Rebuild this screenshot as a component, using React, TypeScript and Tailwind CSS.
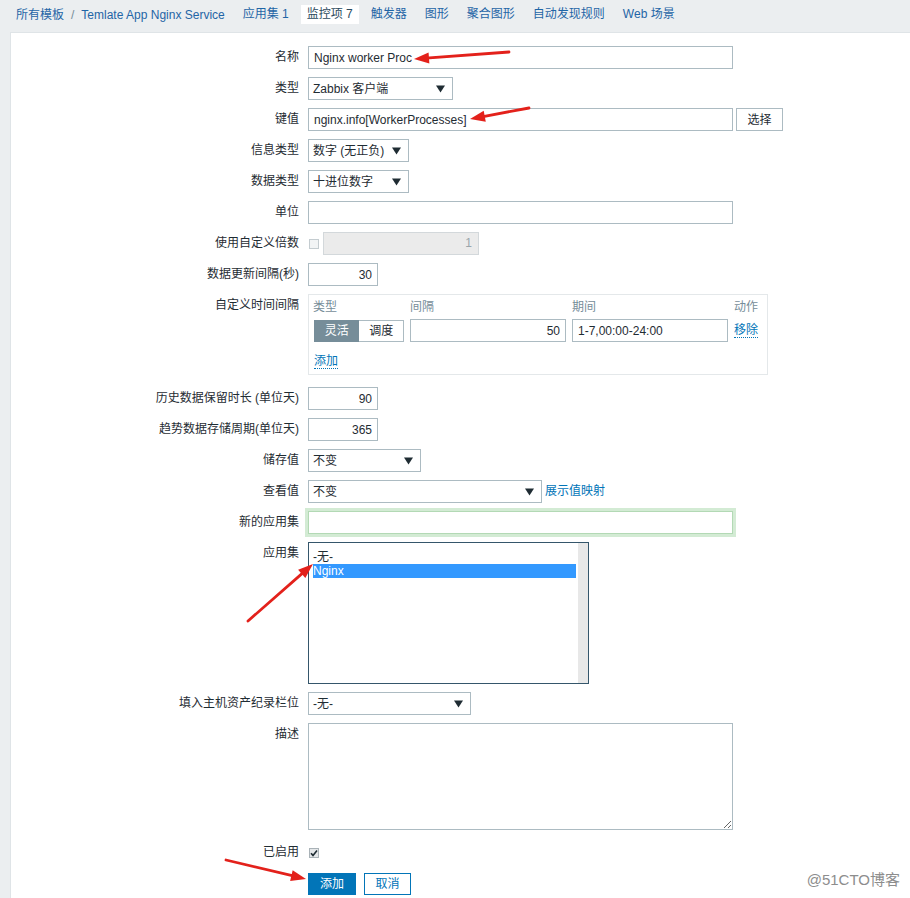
import React from 'react';

const FONT = "font-['Liberation_Sans','Noto_Sans_CJK_SC',sans-serif]";

// arrow annotations drawn over the screenshot
const ARROWS: [number, number, number, number][] = [
  [509, 52, 414, 59],
  [529, 108, 470, 119],
  [248, 621, 313, 564],
  [226, 860, 306, 879],
];

function arrowHead(x1: number, y1: number, x2: number, y2: number) {
  const dx = x2 - x1;
  const dy = y2 - y1;
  const len = Math.hypot(dx, dy);
  const ux = dx / len;
  const uy = dy / len;
  const bx = x2 - ux * 15;
  const by = y2 - uy * 15;
  const px = -uy * 5.5;
  const py = ux * 5.5;
  return `${x2},${y2} ${bx + px},${by + py} ${bx - px},${by - py}`;
}

function Arrows() {
  return (
    <svg className="absolute inset-0 pointer-events-none" width="910" height="898" viewBox="0 0 910 898">
      {ARROWS.map(([x1, y1, x2, y2], i) => {
        const len = Math.hypot(x2 - x1, y2 - y1);
        const ex = x2 - ((x2 - x1) / len) * 12;
        const ey = y2 - ((y2 - y1) / len) * 12;
        return (
          <g key={i}>
            <line x1={x1} y1={y1} x2={ex} y2={ey} stroke="#e3211b" strokeWidth="2.8" strokeLinecap="round" />
            <polygon points={arrowHead(x1, y1, x2, y2)} fill="#e3211b" />
          </g>
        );
      })}
    </svg>
  );
}

function TextInput({ value = '', className = '', right = false }: { value?: string; className?: string; right?: boolean }) {
  return (
    <input
      readOnly
      value={value}
      className={`h-[23px] border border-[#acbbc2] bg-white px-[5px] text-[12px] text-[#1f2c33] outline-none ${right ? 'text-right' : ''} ${className}`}
    />
  );
}

function Select({ value, className = '' }: { value: string; className?: string }) {
  return (
    <div className={`h-[23px] border border-[#acbbc2] bg-white pl-[4px] pr-[7px] flex items-center justify-between text-[#1f2c33] ${className}`}>
      <span>{value}</span>
      <svg width="9" height="8" viewBox="0 0 9 8">
        <path d="M0 0.5 H9 L4.5 7.5 Z" fill="#1f2c33" />
      </svg>
    </div>
  );
}

function Row({ label, children, className = '' }: { label: string; children: React.ReactNode; className?: string }) {
  return (
    <div className={`grid grid-cols-[288px_1fr] gap-x-[9px] ${className}`}>
      <div className="text-right leading-[23px] text-[#1f2c33] whitespace-nowrap">{label}</div>
      <div className="flex items-start">{children}</div>
    </div>
  );
}

const NAV = ['应用集 1', '监控项 7', '触发器', '图形', '聚合图形', '自动发现规则', 'Web 场景'];

function Nav() {
  return (
    <div className="h-[29px] flex items-center pl-[10px] text-[#1f65a6]">
      <span className="px-[6px]">所有模板</span>
      <span className="text-[#768d99] px-[1px]">/</span>
      <span className="px-[6px]">Temlate App Nginx Service</span>
      <div className="flex items-center gap-[6px] ml-[6px]">
        {NAV.map((item) => (
          <span
            key={item}
            className={`px-[6px] leading-[19px] ${item === '监控项 7' ? 'bg-white text-[#2b4a5e]' : ''}`}
          >
            {item}
          </span>
        ))}
      </div>
    </div>
  );
}

function IntervalTable() {
  return (
    <div className="w-[460px] h-[81px] border border-[#e4e8ea] pl-[4px] pt-[5px]">
      <div className="grid grid-cols-[91px_156px_156px_auto] gap-x-[6px] text-[#768d99] leading-[14px]">
        <span>类型</span>
        <span>间隔</span>
        <span>期间</span>
        <span>动作</span>
      </div>
      <div className="grid grid-cols-[91px_156px_156px_auto] gap-x-[6px] mt-[5px] items-center">
        <div className="flex h-[22px] pl-[1px]">
          <span className="w-[46px] bg-[#768d99] text-white flex items-center justify-center">灵活</span>
          <span className="w-[45px] border border-[#acbbc2] border-l-0 text-[#1f2c33] flex items-center justify-center">调度</span>
        </div>
        <TextInput value="50" right className="w-[156px] h-[22px]" />
        <TextInput value="1-7,00:00-24:00" className="w-[156px] h-[22px]" />
        <span className="text-[#0275b8] border-b border-dotted border-[#0275b8] leading-[14px] self-center w-fit">移除</span>
      </div>
      <div className="mt-[10px] pl-[1px]">
        <span className="text-[#0275b8] border-b border-dotted border-[#0275b8] leading-[14px]">添加</span>
      </div>
    </div>
  );
}

export default function App() {
  return (
    <div className={`relative w-[910px] h-[898px] overflow-hidden bg-[#ebeef0] text-[12px] ${FONT}`}>
      <Nav />
      <div className="ml-[10px] mt-[3px] h-[900px] bg-white border-l border-t border-[#dfe4e7] pt-[13px] flex flex-col gap-[8px]">
        <Row label="名称">
          <TextInput value="Nginx worker Proc" className="w-[425px]" />
        </Row>
        <Row label="类型">
          <Select value="Zabbix 客户端" className="w-[145px]" />
        </Row>
        <Row label="键值">
          <TextInput value="nginx.info[WorkerProcesses]" className="w-[425px]" />
          <button className="ml-[3px] h-[23px] w-[47px] border border-[#acbbc2] bg-white text-[#1f2c33] text-[12px]">选择</button>
        </Row>
        <Row label="信息类型">
          <Select value="数字 (无正负)" className="w-[101px]" />
        </Row>
        <Row label="数据类型">
          <Select value="十进位数字" className="w-[101px]" />
        </Row>
        <Row label="单位">
          <TextInput className="w-[425px]" />
        </Row>
        <Row label="使用自定义倍数">
          <div className="flex items-center h-[23px]">
            <span className="ml-[1px] w-[10px] h-[10px] border border-[#c4ccd0] bg-[#f2f4f5]" />
            <div className="ml-[4px] w-[156px] h-[23px] border border-[#d3d8db] bg-[#ebebeb] text-right pr-[6px] leading-[21px] text-[#9aa5ab]">1</div>
          </div>
        </Row>
        <Row label="数据更新间隔(秒)">
          <TextInput value="30" right className="w-[70px]" />
        </Row>
        <Row label="自定义时间间隔" className="mb-[4px]">
          <IntervalTable />
        </Row>
        <Row label="历史数据保留时长 (单位天)">
          <TextInput value="90" right className="w-[70px]" />
        </Row>
        <Row label="趋势数据存储周期(单位天)">
          <TextInput value="365" right className="w-[70px]" />
        </Row>
        <Row label="储存值">
          <Select value="不变" className="w-[113px]" />
        </Row>
        <Row label="查看值">
          <Select value="不变" className="w-[234px]" />
          <span className="ml-[3px] leading-[23px] text-[#0275b8]">展示值映射</span>
        </Row>
        <Row label="新的应用集">
          <TextInput className="w-[425px] !border-[#b3d9b5] shadow-[0_0_0_3px_#d3ebd4]" />
        </Row>
        <Row label="应用集">
          <div className="w-[281px] h-[142px] border border-[#35566b] flex">
            <div className="flex-1 pl-[4px] pr-[2px] pt-[7px] leading-[14px] text-[#1f2c33]">
              <div>-无-</div>
              <div className="bg-[#3399ff] text-white">Nginx</div>
            </div>
            <div className="w-[10px] bg-[#e8e8e8]" />
          </div>
        </Row>
        <Row label="填入主机资产纪录栏位">
          <Select value="-无-" className="w-[163px]" />
        </Row>
        <Row label="描述">
          <textarea readOnly className="w-[425px] h-[107px] border border-[#acbbc2] bg-white resize outline-none" />
        </Row>
        <Row label="已启用" className="mt-[3px]">
          <div className="h-[23px] flex items-center">
            <span className="ml-[1px] w-[10px] h-[10px] border border-[#a9b2b7] bg-[#e4e7e9] flex items-center justify-center">
              <svg width="8" height="8" viewBox="0 0 8 8">
                <path d="M1 4.2 L3 6.4 L7 1.4" stroke="#1f2c33" strokeWidth="1.6" fill="none" />
              </svg>
            </span>
          </div>
        </Row>
        <div className="grid grid-cols-[288px_1fr] gap-x-[9px] mt-[1px]">
          <div />
          <div className="flex gap-[8px]">
            <button className="h-[22px] w-[48px] bg-[#0275b8] text-white text-[12px]">添加</button>
            <button className="h-[22px] w-[47px] border border-[#0275b8] bg-white text-[#0275b8] text-[12px]">取消</button>
          </div>
        </div>
      </div>
      <Arrows />
      <div className="absolute right-[8px] bottom-[9px] px-[2px] bg-white/70 text-[15px] text-[#8d8d8d] leading-[18px]">@51CTO博客</div>
    </div>
  );
}
